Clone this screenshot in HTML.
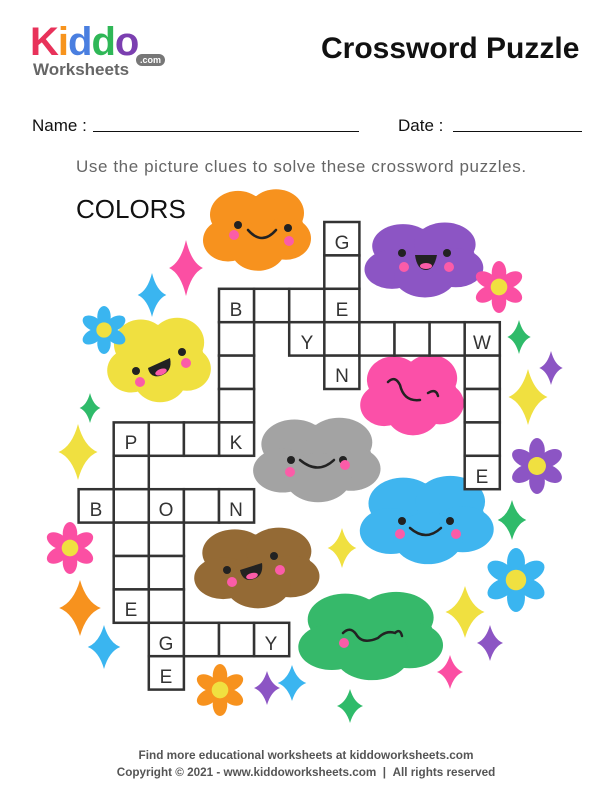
<!DOCTYPE html>
<html><head><meta charset="utf-8"><style>
body{margin:0;width:612px;height:792px;background:#fff;position:relative;overflow:hidden;font-family:"Liberation Sans",sans-serif}
.abs{position:absolute;white-space:nowrap}
</style></head><body>
<div class="abs" style="left:30px;top:22px;font:bold 40px 'Liberation Sans',sans-serif;letter-spacing:-1px;line-height:40px">
<span style="color:#e8325a">K</span><span style="color:#f7941d">i</span><span style="color:#4a7fe0">d</span><span style="color:#2fb757">d</span><span style="color:#7b3fb0">o</span></div>
<div class="abs" style="left:33px;top:60px;font:bold 17px 'Liberation Sans',sans-serif;color:#666">Worksheets</div>
<div class="abs" style="left:136px;top:54px;background:#777;color:#fff;font:bold 9px 'Liberation Sans';padding:1px 4px;border-radius:7px">.com</div>
<div class="abs" style="left:321px;top:32px;font:bold 30px 'Liberation Sans',sans-serif;color:#111">Crossword Puzzle</div>
<div class="abs" style="left:32px;top:116px;font:17px 'Liberation Sans',sans-serif;color:#111">Name :</div>
<div class="abs" style="left:93px;top:131px;width:266px;border-top:1.5px solid #111"></div>
<div class="abs" style="left:398px;top:116px;font:17px 'Liberation Sans',sans-serif;color:#111">Date :</div>
<div class="abs" style="left:453px;top:131px;width:129px;border-top:1.5px solid #111"></div>
<div class="abs" style="left:76px;top:157px;font:17px 'Liberation Sans',sans-serif;letter-spacing:0.6px;color:#666">Use the picture clues to solve these crossword puzzles.</div>
<div class="abs" style="left:76px;top:194px;font:26px 'Liberation Sans',sans-serif;color:#111">COLORS</div>
<svg class="abs" style="left:0;top:0" width="612" height="792">
<defs>
<path id="st" d="M0,-1 Q0.2,-0.2 0.65,0 Q0.2,0.2 0,1 Q-0.2,0.2 -0.65,0 Q-0.2,-0.2 0,-1Z"/>
<g id="fl"><ellipse cx="0" cy="-0.55" rx="0.28" ry="0.45"/><ellipse cx="0" cy="-0.55" rx="0.28" ry="0.45" transform="rotate(60)"/><ellipse cx="0" cy="-0.55" rx="0.28" ry="0.45" transform="rotate(120)"/><ellipse cx="0" cy="-0.55" rx="0.28" ry="0.45" transform="rotate(180)"/><ellipse cx="0" cy="-0.55" rx="0.28" ry="0.45" transform="rotate(240)"/><ellipse cx="0" cy="-0.55" rx="0.28" ry="0.45" transform="rotate(300)"/><circle r="0.32" fill="#f0e040"/></g>
<g id="bl"><ellipse cx="0" cy="0" rx="0.46" ry="0.4"/><circle cx="-0.2" cy="-0.18" r="0.28"/><circle cx="0.18" cy="-0.2" r="0.28"/><circle cx="0.28" cy="0.1" r="0.25"/><circle cx="-0.3" cy="0.12" r="0.25"/><circle cx="0" cy="0.2" r="0.28"/></g>
</defs>
<use href="#bl" fill="#f7921e" transform="translate(258,230) scale(100,85)"/>
<use href="#bl" fill="#8c55c4" transform="translate(425,260) scale(110,78)"/>
<use href="#bl" fill="#f0e040" transform="translate(160,360) scale(96,88)"/>
<use href="#bl" fill="#fb50a8" transform="translate(413,395) scale(96,84)"/>
<use href="#bl" fill="#a3a3a3" transform="translate(318,460) scale(118,88)"/>
<use href="#bl" fill="#3fb5ef" transform="translate(428,520) scale(124,92)"/>
<use href="#bl" fill="#946a35" transform="translate(258,568) scale(116,84)"/>
<use href="#bl" fill="#36b96a" transform="translate(372,636) scale(134,92)"/>
<g fill="#222">
<circle cx="238" cy="225" r="4"/><circle cx="288" cy="228" r="4"/>
<circle cx="402" cy="253" r="4"/><circle cx="447" cy="253" r="4"/>
<circle cx="136" cy="371" r="4"/><circle cx="182" cy="352" r="4"/>
<circle cx="291" cy="460" r="4"/><circle cx="343" cy="460" r="4"/>
<circle cx="402" cy="521" r="4"/><circle cx="450" cy="521" r="4"/>
<circle cx="227" cy="570" r="4"/><circle cx="274" cy="556" r="4"/>
</g>
<g fill="#fb5ca8"><circle cx="234" cy="235" r="5"/><circle cx="289" cy="241" r="5"/><circle cx="404" cy="267" r="5"/><circle cx="449" cy="267" r="5"/><circle cx="140" cy="382" r="5"/><circle cx="186" cy="363" r="5"/><circle cx="290" cy="472" r="5"/><circle cx="345" cy="465" r="5"/><circle cx="400" cy="534" r="5"/><circle cx="456" cy="534" r="5"/><circle cx="232" cy="582" r="5"/><circle cx="280" cy="570" r="5"/><circle cx="344" cy="643" r="5"/></g>
<g fill="none" stroke="#222" stroke-width="2.5" stroke-linecap="round">
<path d="M248,230 Q262,246 276,230"/><path d="M300,460 Q318,475 334,460"/><path d="M410,528 Q426,542 441,528"/>
<path d="M388,382 Q395,375 400,385 Q404,402 420,400 M428,393 Q436,388 438,396"/>
<path d="M343,633 Q350,626 356,634 Q362,645 378,638 Q386,630 395,633 Q400,628 402,636"/>
</g>
<g fill="#222"><path d="M415,255 L437,255 Q434,270 426,270 Q417,270 415,255Z"/><path d="M148,368 L170,358 Q173,372 160,376 Q150,378 148,368Z"/><path d="M240,570 L262,563 Q264,578 250,580 Q242,580 240,570Z"/></g>
<g fill="#fb5ca8"><ellipse cx="426" cy="266" rx="6" ry="3"/><ellipse cx="161" cy="372" rx="6" ry="3" transform="rotate(-20 161 372)"/><ellipse cx="252" cy="576" rx="6" ry="3" transform="rotate(-15 252 576)"/></g>
<use href="#st" fill="#fb4fa3" transform="translate(186,268) scale(26,28)"/>
<use href="#st" fill="#3ab5f0" transform="translate(152,295) scale(22,22)"/>
<use href="#st" fill="#2fbb6a" transform="translate(90,408) scale(16,15)"/>
<use href="#st" fill="#f0e040" transform="translate(78,452) scale(30,28)"/>
<use href="#st" fill="#2fbb6a" transform="translate(519,337) scale(18,17)"/>
<use href="#st" fill="#8c55c4" transform="translate(551,368) scale(18,17)"/>
<use href="#st" fill="#f0e040" transform="translate(528,397) scale(30,28)"/>
<use href="#st" fill="#2fbb6a" transform="translate(512,520) scale(22,20)"/>
<use href="#st" fill="#f0e040" transform="translate(342,548) scale(22,20)"/>
<use href="#st" fill="#f7921e" transform="translate(80,608) scale(32,28)"/>
<use href="#st" fill="#3ab5f0" transform="translate(104,647) scale(25,22)"/>
<use href="#st" fill="#f0e040" transform="translate(465,612) scale(30,26)"/>
<use href="#st" fill="#8c55c4" transform="translate(490,643) scale(20,18)"/>
<use href="#st" fill="#fb4fa3" transform="translate(450,672) scale(20,17)"/>
<use href="#st" fill="#8c55c4" transform="translate(267,688) scale(20,17)"/>
<use href="#st" fill="#3ab5f0" transform="translate(292,683) scale(22,18)"/>
<use href="#st" fill="#2fbb6a" transform="translate(350,706) scale(20,17)"/>
<use href="#fl" fill="#fb4fa3" transform="translate(499,287) scale(26)"/>
<use href="#fl" fill="#3ab5f0" transform="translate(104,330) scale(24)"/>
<use href="#fl" fill="#8c55c4" transform="translate(537,466) scale(28)"/>
<use href="#fl" fill="#fb4fa3" transform="translate(70,548) scale(26)"/>
<use href="#fl" fill="#3ab5f0" transform="translate(516,580) scale(32)"/>
<use href="#fl" fill="#f7921e" transform="translate(220,690) scale(26)"/>
<g fill="#fff" stroke="#333" stroke-width="2.5">
<rect x="324.3" y="222" width="35.1" height="33.4"/><rect x="324.3" y="255.4" width="35.1" height="33.4"/><rect x="324.3" y="288.8" width="35.1" height="33.4"/><rect x="324.3" y="322.2" width="35.1" height="33.4"/><rect x="324.3" y="355.6" width="35.1" height="33.4"/>
<rect x="219" y="288.8" width="35.1" height="33.4"/><rect x="254.1" y="288.8" width="35.1" height="33.4"/><rect x="289.2" y="288.8" width="35.1" height="33.4"/>
<rect x="219" y="322.2" width="35.1" height="33.4"/><rect x="219" y="355.6" width="35.1" height="33.4"/><rect x="219" y="389" width="35.1" height="33.4"/><rect x="219" y="422.4" width="35.1" height="33.4"/>
<rect x="113.7" y="422.4" width="35.1" height="33.4"/><rect x="148.8" y="422.4" width="35.1" height="33.4"/><rect x="183.9" y="422.4" width="35.1" height="33.4"/>
<rect x="289.2" y="322.2" width="35.1" height="33.4"/><rect x="359.4" y="322.2" width="35.1" height="33.4"/><rect x="394.5" y="322.2" width="35.1" height="33.4"/><rect x="429.6" y="322.2" width="35.1" height="33.4"/><rect x="464.7" y="322.2" width="35.1" height="33.4"/>
<rect x="464.7" y="355.6" width="35.1" height="33.4"/><rect x="464.7" y="389" width="35.1" height="33.4"/><rect x="464.7" y="422.4" width="35.1" height="33.4"/><rect x="464.7" y="455.8" width="35.1" height="33.4"/>
<rect x="113.7" y="455.8" width="35.1" height="33.4"/><rect x="113.7" y="489.2" width="35.1" height="33.4"/><rect x="113.7" y="522.6" width="35.1" height="33.4"/><rect x="113.7" y="556" width="35.1" height="33.4"/><rect x="113.7" y="589.4" width="35.1" height="33.4"/>
<rect x="78.6" y="489.2" width="35.1" height="33.4"/><rect x="148.8" y="489.2" width="35.1" height="33.4"/><rect x="183.9" y="489.2" width="35.1" height="33.4"/><rect x="219" y="489.2" width="35.1" height="33.4"/>
<rect x="148.8" y="522.6" width="35.1" height="33.4"/><rect x="148.8" y="556" width="35.1" height="33.4"/><rect x="148.8" y="589.4" width="35.1" height="33.4"/><rect x="148.8" y="622.8" width="35.1" height="33.4"/><rect x="148.8" y="656.2" width="35.1" height="33.4"/>
<rect x="183.9" y="622.8" width="35.1" height="33.4"/><rect x="219" y="622.8" width="35.1" height="33.4"/><rect x="254.1" y="622.8" width="35.1" height="33.4"/>
</g>
<g font-family="Liberation Sans,sans-serif" font-size="19" fill="#333" text-anchor="middle">
<text x="342" y="249">G</text><text x="342" y="316">E</text><text x="342" y="382">N</text>
<text x="236" y="316">B</text><text x="236" y="449">K</text><text x="131" y="449">P</text>
<text x="307" y="349">Y</text><text x="482" y="349">W</text><text x="482" y="483">E</text>
<text x="96" y="516">B</text><text x="166" y="516">O</text><text x="236" y="516">N</text>
<text x="131" y="616">E</text><text x="166" y="650">G</text><text x="166" y="683">E</text><text x="271" y="650">Y</text>
</g>
</svg>
<div class="abs" style="left:0;width:612px;text-align:center;top:748px;font:bold 11.8px 'Liberation Sans',sans-serif;color:#555">Find more educational worksheets at kiddoworksheets.com</div>
<div class="abs" style="left:0;width:612px;text-align:center;top:766px;font:bold 11.7px 'Liberation Sans',sans-serif;color:#555">Copyright © 2021 - www.kiddoworksheets.com &nbsp;| &nbsp;All rights reserved</div>
</body></html>
